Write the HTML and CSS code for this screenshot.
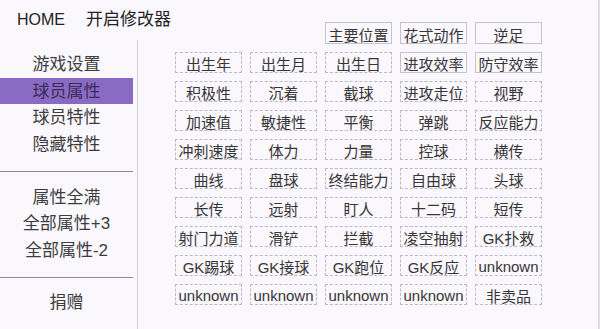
FILE: index.html
```html
<!DOCTYPE html>
<html lang="zh-CN">
<head>
<meta charset="utf-8">
<title>开启修改器</title>
<link rel="stylesheet" href="styles.css">
</head>
<body>
<div class="app">
  <aside class="side">
    <div class="title"><span class="home">HOME</span><span class="name">开启修改器</span></div>
    <nav class="nav">
      <div class="item">游戏设置</div>
      <div class="item active">球员属性</div>
      <div class="item">球员特性</div>
      <div class="item">隐藏特性</div>
      <hr class="sep">
      <div class="item">属性全满</div>
      <div class="item">全部属性+3</div>
      <div class="item">全部属性-2</div>
      <hr class="sep sep-last">
      <div class="item">捐赠</div>
    </nav>
  </aside>
  <main class="main">
    <div class="grid">
      <div class="cell solid col3">主要位置</div>
      <div class="cell solid">花式动作</div>
      <div class="cell solid">逆足</div>

      <div class="cell">出生年</div>
      <div class="cell">出生月</div>
      <div class="cell">出生日</div>
      <div class="cell solid">进攻效率</div>
      <div class="cell solid">防守效率</div>

      <div class="cell">积极性</div>
      <div class="cell">沉着</div>
      <div class="cell">截球</div>
      <div class="cell">进攻走位</div>
      <div class="cell">视野</div>

      <div class="cell">加速值</div>
      <div class="cell">敏捷性</div>
      <div class="cell">平衡</div>
      <div class="cell">弹跳</div>
      <div class="cell">反应能力</div>

      <div class="cell">冲刺速度</div>
      <div class="cell">体力</div>
      <div class="cell">力量</div>
      <div class="cell">控球</div>
      <div class="cell">横传</div>

      <div class="cell">曲线</div>
      <div class="cell">盘球</div>
      <div class="cell">终结能力</div>
      <div class="cell">自由球</div>
      <div class="cell">头球</div>

      <div class="cell">长传</div>
      <div class="cell">远射</div>
      <div class="cell">盯人</div>
      <div class="cell">十二码</div>
      <div class="cell">短传</div>

      <div class="cell">射门力道</div>
      <div class="cell">滑铲</div>
      <div class="cell">拦截</div>
      <div class="cell">凌空抽射</div>
      <div class="cell">GK扑救</div>

      <div class="cell">GK踢球</div>
      <div class="cell">GK接球</div>
      <div class="cell">GK跑位</div>
      <div class="cell">GK反应</div>
      <div class="cell">unknown</div>

      <div class="cell">unknown</div>
      <div class="cell">unknown</div>
      <div class="cell">unknown</div>
      <div class="cell">unknown</div>
      <div class="cell">非卖品</div>
    </div>
  </main>
</div>
</body>
</html>
```

FILE: styles.css
```css
html, body {
  margin: 0;
  padding: 0;
}

body {
  background: #faf7fd;
  font-family: "Liberation Sans", "Noto Sans CJK SC", sans-serif;
  color: #333;
}

.app {
  display: flex;
  width: 600px;
  height: 329px;
  box-sizing: border-box;
  border-right: 2px solid #dddae2;
  overflow: hidden;
}

.side {
  flex: none;
  width: 138px;
  display: flex;
  flex-direction: column;
}

.title {
  height: 40px;
  line-height: 39px;
  padding-left: 17px;
  white-space: nowrap;
  font-size: 16px;
  color: #222;
}

.name {
  margin-left: 21px;
  font-size: 17px;
}

.nav {
  flex: 1;
  border-right: 1px solid #d6d3db;
  padding: 11px 4px 0 0;
}

.item {
  height: 26.7px;
  line-height: 28.5px;
  text-align: center;
  font-size: 17px;
  color: #3d3d3d;
  white-space: nowrap;
  overflow: hidden;
}

.item.active {
  background: #8a6bc3;
  color: #3c2b5c;
}

.sep {
  height: 0;
  border: none;
  border-top: 1px solid #8e8a98;
  margin: 13px 0 12px;
}

.sep-last {
  margin: 13px 0 11px;
}

.main {
  flex: 1;
  padding: 22px 0 0 37px;
}

.grid {
  display: grid;
  grid-template-columns: repeat(5, 67px);
  grid-template-rows: 22px repeat(9, 21px);
  column-gap: 8px;
  row-gap: 8px;
}

.cell {
  box-sizing: border-box;
  border: 1px dashed #bdb8c4;
  display: flex;
  align-items: center;
  justify-content: center;
  padding-top: 2px;
  font-size: 15px;
  color: #363636;
  white-space: nowrap;
}

.cell.solid {
  border: 1px solid #c5c1cd;
}

.col3 {
  grid-column-start: 3;
}
```
